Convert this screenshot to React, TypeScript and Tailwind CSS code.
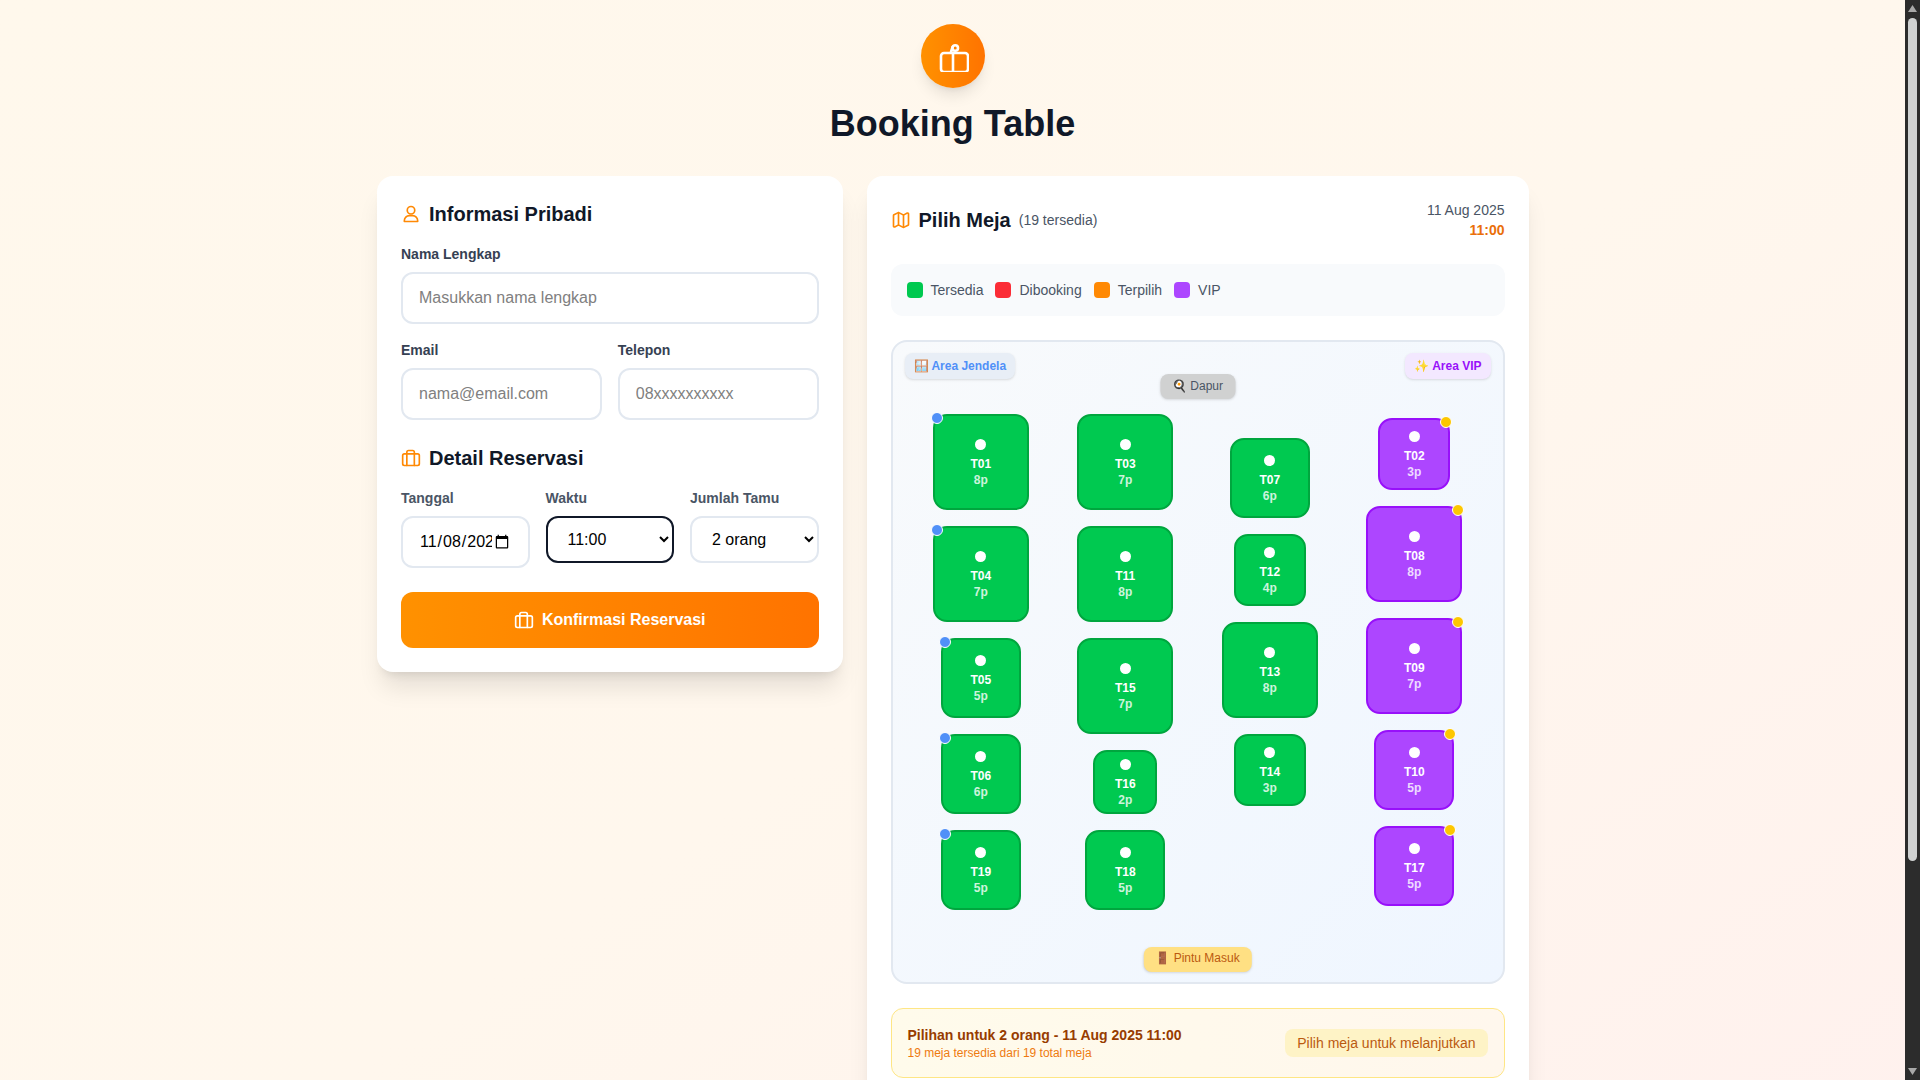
import { Map as MapIcon } from "lucide-react";

type TableInfo = { id: string; seats: number; size: string; corner?: boolean };

// suitcase used next to "Detail Reservasi" and on the submit button
function BagIcon({ className }: { className: string }) {
  return (
    <svg viewBox="0 0 24 24" fill="none" stroke="currentColor" strokeWidth="2" strokeLinecap="round" strokeLinejoin="round" className={className}>
      <rect x="2" y="7" width="20" height="14" rx="2" />
      <path d="M7 21V5a2 2 0 0 1 2-2h5a2 2 0 0 1 2 2v16" />
    </svg>
  );
}

function GiftIcon({ className }: { className: string }) {
  return (
    <svg viewBox="0 0 32 32" fill="none" stroke="currentColor" strokeWidth="2.6" strokeLinecap="round" strokeLinejoin="round" className={className}>
      <rect x="4" y="13" width="27" height="19" rx="3" />
      <path d="M16 13v19" />
      <path d="M14 12l1.6-5" />
      <circle cx="18.2" cy="8" r="2.8" />
    </svg>
  );
}

function UserIcon({ className }: { className: string }) {
  return (
    <svg viewBox="0 0 24 24" fill="none" stroke="currentColor" strokeWidth="2" strokeLinecap="round" strokeLinejoin="round" className={className}>
      <circle cx="12" cy="7.5" r="4.5" />
      <path d="M4 21v-1a6 6 0 0 1 6-6h4a6 6 0 0 1 6 6v1z" />
    </svg>
  );
}

const col1: TableInfo[] = [
  { id: "T01", seats: 8, size: "size-24", corner: true },
  { id: "T04", seats: 7, size: "size-24", corner: true },
  { id: "T05", seats: 5, size: "size-20", corner: true },
  { id: "T06", seats: 6, size: "size-20", corner: true },
  { id: "T19", seats: 5, size: "size-20", corner: true },
];
const col2: TableInfo[] = [
  { id: "T03", seats: 7, size: "size-24" },
  { id: "T11", seats: 8, size: "size-24" },
  { id: "T15", seats: 7, size: "size-24" },
  { id: "T16", seats: 2, size: "size-16" },
  { id: "T18", seats: 5, size: "size-20" },
];
const col3: TableInfo[] = [
  { id: "T07", seats: 6, size: "size-20" },
  { id: "T12", seats: 4, size: "size-[72px]" },
  { id: "T13", seats: 8, size: "size-24" },
  { id: "T14", seats: 3, size: "size-[72px]" },
];
const col4: TableInfo[] = [
  { id: "T02", seats: 3, size: "size-[72px]" },
  { id: "T08", seats: 8, size: "size-24" },
  { id: "T09", seats: 7, size: "size-24" },
  { id: "T10", seats: 5, size: "size-20" },
  { id: "T17", seats: 5, size: "size-20" },
];

function Table({ t, vip }: { t: TableInfo; vip?: boolean }) {
  return (
    <div
      className={`relative ${t.size} rounded-[14px] border-2 pt-[2px] flex flex-col items-center justify-center text-white ${
        vip ? "bg-[#ad46ff] border-[#9810fa]" : "bg-[#00c950] border-[#00a63e]"
      }`}
    >
      {t.corner && <span className="absolute -top-1 -left-1 size-3 rounded-full bg-[#5090f8] border border-white" />}
      {vip && <span className="absolute -top-1 -right-1 size-3 rounded-full bg-[#fdc700] border border-white" />}
      <span className="size-[11px] rounded-full bg-white mb-[6px]" />
      <span className="text-xs font-bold leading-4">{t.id}</span>
      <span className="text-xs font-bold leading-4 opacity-80">{t.seats}p</span>
    </div>
  );
}

function Field({ label, placeholder }: { label: string; placeholder: string }) {
  return (
    <div>
      <label className="block text-sm font-bold text-[#364153] mb-2 leading-5">{label}</label>
      <input
        placeholder={placeholder}
        className="w-full h-[52px] px-4 rounded-xl border-2 border-[#e2e8f0] bg-white text-base placeholder:text-[#808080] outline-none"
      />
    </div>
  );
}

// the browser's dark scrollbar in the reference, headless chrome hides the real one
function FakeScrollbar() {
  return (
    <div className="w-[15px] shrink-0 bg-[#2c2c2c] flex flex-col items-center py-[5px]">
      <svg viewBox="0 0 9 7" className="w-[9px] h-[7px] fill-[#a8a8a8]"><path d="M4.5 0L9 7H0z" /></svg>
      <div className="mt-[6px] w-[9px] h-[843px] rounded-full bg-[#d0d2d2]" />
      <svg viewBox="0 0 9 7" className="mt-auto w-[9px] h-[7px] fill-[#a8a8a8]"><path d="M0 0h9L4.5 7z" /></svg>
    </div>
  );
}

export default function App() {
  return (
    <div className="flex h-screen font-['Liberation_Sans',Arial,sans-serif]">
      <div className="flex-1 min-w-0 overflow-y-auto [scrollbar-width:none]">
        <div className="min-h-[1340px] bg-gradient-to-br from-[#fff8ec] via-[#fff7ed] to-[#fff0ee] pt-6">
          <div className="flex flex-col items-center">
            <div className="size-16 rounded-full bg-gradient-to-r from-[#ff9100] to-[#ff7300] flex items-center justify-center text-white shadow-lg">
              <GiftIcon className="size-8" />
            </div>
            <h1 className="mt-4 text-4xl leading-10 font-bold text-[#101828]">Booking Table</h1>
          </div>

          <div className="mx-auto mt-8 w-[1152px] grid grid-cols-12 gap-6 items-start">
            <div className="col-span-5 bg-white rounded-2xl shadow-xl py-6 pr-6 pl-[24.5px]">
              <div className="flex items-center gap-2 mb-4">
                <UserIcon className="size-5 text-[#ff8904]" />
                <h2 className="text-xl font-bold leading-7 text-[#101828]">Informasi Pribadi</h2>
              </div>
              <Field label="Nama Lengkap" placeholder="Masukkan nama lengkap" />
              <div className="grid grid-cols-2 gap-4 mt-4">
                <Field label="Email" placeholder="nama@email.com" />
                <Field label="Telepon" placeholder="08xxxxxxxxxx" />
              </div>

              <div className="flex items-center gap-2 mt-6 mb-4">
                <BagIcon className="size-5 text-[#ff8904]" />
                <h2 className="text-xl font-bold leading-7 text-[#101828]">Detail Reservasi</h2>
              </div>
              <div className="grid grid-cols-3 gap-4">
                <div>
                  <label className="block text-sm font-bold text-[#4a5565] mb-2 leading-5">Tanggal</label>
                  <input
                    type="date"
                    defaultValue="2025-11-08"
                    className="w-full h-[52px] px-4 rounded-xl border-2 border-[#e2e8f0] bg-white text-base outline-none"
                  />
                </div>
                <div>
                  <label className="block text-sm font-bold text-[#4a5565] mb-2 leading-5">Waktu</label>
                  <select defaultValue="11:00" className="w-full h-[47px] px-4 rounded-xl border-2 border-[#101828] bg-white text-base outline-none">
                    <option>11:00</option>
                  </select>
                </div>
                <div>
                  <label className="block text-sm font-bold text-[#4a5565] mb-2 leading-5">Jumlah Tamu</label>
                  <select defaultValue="2 orang" className="w-full h-[47px] px-4 rounded-xl border-2 border-[#e2e8f0] bg-white text-base outline-none">
                    <option>2 orang</option>
                  </select>
                </div>
              </div>
              <button className="mt-6 w-full h-14 rounded-xl bg-gradient-to-r from-[#ff9100] to-[#ff7300] text-white font-bold text-base flex items-center justify-center gap-2">
                <BagIcon className="size-5" />
                Konfirmasi Reservasi
              </button>
            </div>

            <div className="col-span-7 bg-white rounded-2xl shadow-xl p-6">
              <div className="flex items-start justify-between">
                <div className="flex items-center gap-2 mt-[6px]">
                  <MapIcon className="size-5 text-[#ff8904]" />
                  <h2 className="text-xl font-bold leading-7 text-[#101828]">Pilih Meja</h2>
                  <span className="text-sm text-[#4a5565]">(19 tersedia)</span>
                </div>
                <div className="text-right text-sm leading-5 text-[#4a5565]">
                  <div>11 Aug 2025</div>
                  <div className="font-bold text-[#ea6f0a]">11:00</div>
                </div>
              </div>

              <div className="mt-6 h-[52px] rounded-xl bg-[#f8fafc] px-4 flex items-center gap-3 text-sm text-[#4a5565]">
                <span className="flex items-center gap-2"><span className="size-4 rounded bg-[#00c950]" />Tersedia</span>
                <span className="flex items-center gap-2"><span className="size-4 rounded bg-[#fb2c36]" />Dibooking</span>
                <span className="flex items-center gap-2"><span className="size-4 rounded bg-[#ff8904]" />Terpilih</span>
                <span className="flex items-center gap-2"><span className="size-4 rounded bg-[#ad46ff]" />VIP</span>
              </div>

              <div className="relative mt-6 rounded-2xl border-2 border-[#e2e8f0] bg-gradient-to-br from-[#f8fafc] to-[#eff6ff] px-6 pt-[72px] pb-[72px]">
                <span className="absolute top-[11px] left-3 px-[9px] h-[26px] rounded-lg bg-[#e8eef6] text-xs font-bold text-[#5090f8] flex items-center gap-1 shadow-sm">🪟 Area Jendela</span>
                <span className="absolute top-[11px] right-3 px-[9px] h-[26px] rounded-lg bg-[#f3e8ff] text-xs font-bold text-[#9810fa] flex items-center gap-1 shadow-sm">✨ Area VIP</span>
                <span className="absolute top-[32px] left-1/2 -translate-x-1/2 px-3 pb-[2px] h-[25px] rounded-lg bg-[#d0d1d1] text-xs text-[#4a5565] flex items-center gap-1 shadow-sm">🍳 Dapur</span>
                <div className="grid grid-cols-4 gap-4">
                  <div className="flex flex-col items-center gap-4">{col1.map((t) => <Table key={t.id} t={t} />)}</div>
                  <div className="flex flex-col items-center gap-4">{col2.map((t) => <Table key={t.id} t={t} />)}</div>
                  <div className="flex flex-col items-center gap-4 mt-6">{col3.map((t) => <Table key={t.id} t={t} />)}</div>
                  <div className="flex flex-col items-center gap-4 mt-1">{col4.map((t) => <Table key={t.id} t={t} vip />)}</div>
                </div>
                <span className="absolute bottom-[10px] left-1/2 -translate-x-1/2 px-3 pb-[3px] h-[25px] rounded-lg bg-[#ffe083] text-xs text-[#bb5a10] flex items-center gap-1 shadow-sm">🚪 Pintu Masuk</span>
              </div>

              <div className="mt-6 h-[70px] rounded-xl border border-[#fee685] bg-gradient-to-r from-[#fffbeb] to-[#fff7ed] px-4 flex items-center justify-between">
                <div>
                  <div className="text-sm font-bold leading-5 text-[#973c00]">Pilihan untuk 2 orang - 11 Aug 2025 11:00</div>
                  <div className="text-xs leading-4 text-[#ee7a10]">19 meja tersedia dari 19 total meja</div>
                </div>
                <span className="px-3 h-7 rounded-lg bg-[#fef3c6] text-sm text-[#bb5a10] flex items-center">Pilih meja untuk melanjutkan</span>
              </div>
            </div>
          </div>
        </div>
      </div>
      <FakeScrollbar />
    </div>
  );
}
